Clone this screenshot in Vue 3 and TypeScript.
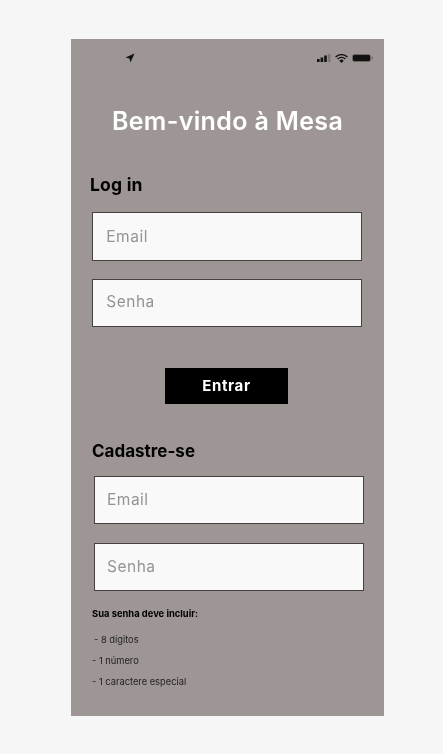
<script setup lang="ts">
const rules: string[] = ['- 8 dígitos', '- 1 número', '- 1 caractere especial']
</script>

<template>
  <main class="page">
    <section class="phone">
      <header class="status">
        <svg class="loc" width="10" height="10" viewBox="0 0 10 10"><path d="M9.5.5 .5 4.6l4 .9.9 4z" fill="#111" /></svg>
        <div class="indicators">
          <svg width="14" height="8" viewBox="0 0 14 8"><rect x="0" y="5" width="2.6" height="3" fill="#111" /><rect x="3.6" y="3.5" width="2.6" height="4.5" fill="#111" /><rect x="7.2" y="1.5" width="2.6" height="6.5" fill="#111" /><rect x="10.8" y="0" width="2.6" height="8" fill="#7d7676" /></svg>
          <svg width="13" height="9" viewBox="0 0 13 9"><path d="M.6 3a8.6 8.6 0 0 1 11.8 0M2.6 5a5.6 5.6 0 0 1 7.8 0" fill="none" stroke="#111" stroke-width="1.4" /><path d="M6.5 9 4.3 6.7a3.1 3.1 0 0 1 4.4 0z" fill="#111" /></svg>
          <svg width="21" height="8" viewBox="0 0 21 8"><rect x=".5" y=".5" width="18" height="7" rx="2" fill="#111" stroke="#6f6868" /><rect x="19.5" y="2.5" width="1.2" height="3" rx=".6" fill="#6f6868" /></svg>
        </div>
      </header>

      <h1>Bem-vindo à Mesa</h1>

      <h2 class="login-title">Log in</h2>
      <form class="fields login" @submit.prevent>
        <div class="field"><span>Email</span></div>
        <div class="field short"><span>Senha</span></div>
        <button type="submit">Entrar</button>
      </form>

      <h2 class="signup-title">Cadastre-se</h2>
      <div class="fields signup">
        <div class="field"><span>Email</span></div>
        <div class="field"><span>Senha</span></div>
      </div>

      <p class="hint">Sua senha deve incluir:</p>
      <ul>
        <li v-for="(rule, i) in rules" :key="rule" :class="{ first: i === 0 }">{{ rule }}</li>
      </ul>
    </section>
  </main>
</template>

<style>
html, body { margin: 0; background: #f6f6f6; }
</style>

<style scoped>
.page {
  width: 443px;
  height: 754px;
  padding: 39px 0 0 71px;
  box-sizing: border-box;
  font-family: Inter, "Open Sans", sans-serif;
}
.phone {
  width: 313px;
  height: 677px;
  background: #9e9595;
  overflow: hidden;
  color: #000;
  filter: blur(0.25px);
}
.status {
  display: flex;
  justify-content: space-between;
  align-items: center;
  height: 10px;
  padding: 14px 11px 0 54px;
}
.indicators { display: flex; align-items: center; gap: 4px; }
h1 {
  margin: 43px 0 0;
  height: 30px;
  font-size: 25px;
  line-height: 30px;
  font-weight: 600;
  color: #fff;
  text-align: center;
  letter-spacing: 0.35px;
}
h2 {
  margin: 0;
  font-size: 17px;
  line-height: 22px;
  font-weight: 700;
}
.login-title { margin: 38px 0 0 19px; font-size: 17.5px; letter-spacing: 0.2px; }
.signup-title { margin: 36px 0 0 21px; }
.fields { display: flex; flex-direction: column; }
.login { margin: 16px 0 0 21.3px; gap: 18px; }
.signup { margin: 14px 0 0 23px; gap: 19px; }
.field {
  width: 270px;
  height: 48px;
  box-sizing: border-box;
  display: flex;
  align-items: center;
  padding: 0 12px 2px;
  background: #f9f9f9;
  border: 1.5px solid #454141;
  color: #949494;
  font-size: 15.5px;
  letter-spacing: 0.5px;
}
.login .field { height: 49px; padding: 0 13px; }
.login .field.short { height: 48px; padding-bottom: 4px; }
button {
  align-self: flex-start;
  margin: 23px 0 0 72.7px;
  width: 123px;
  height: 36px;
  padding: 0;
  border: 0;
  background: #000;
  color: #fff;
  font: 700 15px/36px Inter, sans-serif;
  letter-spacing: 0.6px;
}
.hint {
  margin: 17px 0 0 21px;
  font-size: 9.4px;
  line-height: 12px;
  font-weight: 700;
}
ul {
  list-style: none;
  margin: 14px 0 0 21px;
  padding: 0;
  display: flex;
  flex-direction: column;
  gap: 9px;
  font-size: 9.3px;
  line-height: 12px;
  color: #222;
}
.first { padding-left: 2px; }
</style>
